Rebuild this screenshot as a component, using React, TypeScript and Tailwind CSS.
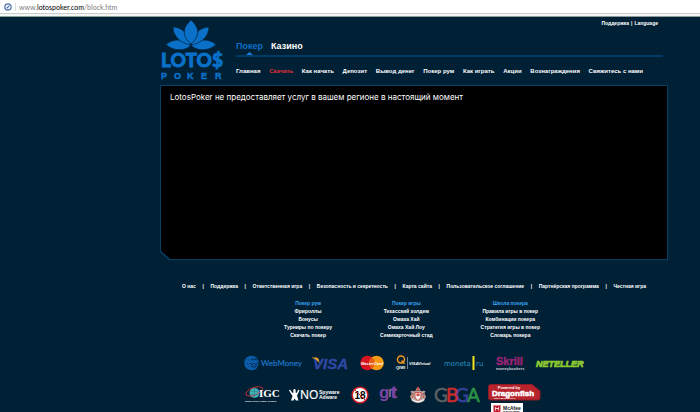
import React from 'react';

const mainNav = [
  'Главная',
  'Скачать',
  'Как начать',
  'Депозит',
  'Вывод денег',
  'Покер рум',
  'Как играть',
  'Акции',
  'Вознаграждения',
  'Свяжитесь с нами',
];

const footerLinks = [
  'О нас',
  'Поддержка',
  'Ответственная игра',
  'Безопасность и секретность',
  'Карта сайта',
  'Пользовательское соглашение',
  'Партнёрская программа',
  'Честная игра',
];

const columns = [
  { title: 'Покер рум', links: ['Фрироллы', 'Бонусы', 'Турниры по покеру', 'Скачать покер'] },
  { title: 'Покер игры', links: ['Техасский холдем', 'Омаха Хай', 'Омаха Хай Лоу', 'Семикарточный стад'] },
  { title: 'Школа покера', links: ['Правила игры в покер', 'Комбинации покера', 'Стратегия игры в покер', 'Словарь покера'] },
];

const AddressBar: React.FC = () => (
  <div className="flex h-[17px] items-start border-b border-[#8f9c9c] bg-[#f4f5f5]">
    <div className="flex h-[14px] w-full items-center border-b border-[#c9cbcd] bg-white pl-1">
      <svg className="h-2 w-2" viewBox="0 0 8 8" fill="none" aria-hidden="true">
        <circle cx="4" cy="4" r="3.2" stroke="#4a6ea9" strokeWidth="1.2" />
        <path d="M2.8 5.2 5.4 2.6M3.4 4.2l.8.8" stroke="#4a6ea9" strokeWidth="1.1" />
      </svg>
      <span className="ml-[3px] h-2 w-px bg-[#dcdcdc]" />
      <span className="ml-[3px] font-['Lato',sans-serif] text-[7px] leading-[12px] font-normal text-[#808080]">
        www.<span className="text-black">lotospoker.com</span>/block.htm
      </span>
    </div>
  </div>
);

const LotosLogo: React.FC = () => (
  <svg className="h-[60px] w-16 shrink-0" viewBox="0 0 64 60" fill="#0a70c8" role="img" aria-label="Lotos Poker">
    <g stroke="#002035" strokeWidth="0.7">
      <path d="M31 25C27 31 13 32 6 24.500 12 19 23 18 31 25z" />
      <path d="M31 25c4 6 18 7 25-.5C50 19 39 18 31 25z" />
      <path d="M31 25C20 23 13 16 13 7c9 0 17 8 18 18z" />
      <path d="M31 25c11-2 18-9 18-18-9 0-17 8-18 18z" />
      <path d="M31 24C22 16 22 8 31 0c9 8 9 16 0 24z" />
    </g>
    <g stroke="#0a70c8">
      <text x="1" y="47" fontFamily="Lato, sans-serif" fontWeight="900" fontSize="19" strokeWidth="0.8">LOTO$</text>
      <text x="1 14 27 41 55" y="58.5" fontFamily="Liberation Sans, sans-serif" fontWeight="bold" fontSize="9" strokeWidth="0.5">POKER</text>
    </g>
  </svg>
);

const Header: React.FC = () => (
  <header className="flex gap-3 pt-[3px]">
    <LotosLogo />
    <div className="min-w-0 flex-1 pr-[5px]">
      <div className="flex justify-end gap-[2px] pr-[5px] text-[5px] leading-[6px]">
        <a href="#support">Поддержка</a>
        <span>|</span>
        <a href="#language">Language</a>
      </div>
      <div className="mt-[14px] flex gap-2 border-b-2 border-[#003a66] text-[9px] leading-[12px]">
        <a href="#poker" className="text-[#0a70c8]">
          Покер
          <svg className="mx-auto h-[3px] w-[7px]" viewBox="0 0 7 3" fill="#1c7ad6" aria-hidden="true">
            <path d="M0 3 3.5 0 7 3z" />
          </svg>
        </a>
        <a href="#casino">Казино</a>
      </div>
      <nav className="mt-[10px] flex justify-between pr-5 whitespace-nowrap text-[6px] leading-[8px]">
        {mainNav.map((item) => (
          <a key={item} href="#nav" className={item === 'Скачать' ? 'text-[#e0303c]' : 'text-white'}>
            {item}
          </a>
        ))}
      </nav>
    </div>
  </header>
);

const Notice: React.FC = () => (
  <main className="mt-[5px] bg-[#073f66] p-px [clip-path:polygon(0_0,100%_0,100%_100%,9px_100%,0_calc(100%-8px))]">
    <div className="min-h-[173px] bg-black px-[9px] py-[5px] font-['Inter',sans-serif] text-[8px] leading-[12px] font-normal [clip-path:polygon(0_0,100%_0,100%_100%,9px_100%,0_calc(100%-8px))]">
      LotosPoker не предоставляет услуг в вашем регионе в настоящий момент
    </div>
  </main>
);

const WebMoney: React.FC = () => (
  <svg className="h-4 w-14 overflow-visible" viewBox="0 0 56 16" role="img" aria-label="WebMoney">
    <circle cx="7.500" cy="8" r="7.300" fill="#0b5cab" />
    <g fill="none" stroke="#002035" strokeWidth="1">
      <path d="M7 3.500 8.800 5.200l1.700-1.700 1.800 1.700 2-2M6 8l1.800 1.800L9.600 8l1.800 1.800L13.500 8l1.500 1M7 12.300l1.800-1.500 1.700 1.700 1.800-1.700 1.700 1.500" />
      <path d="M3.500 4 5 5.500M3 8l1.500 1.500M4 12l1-1" strokeWidth="0.600" />
    </g>
    <text x="17" y="11" fontFamily="Lato, sans-serif" fontWeight="normal" fontSize="8" fill="#1b74c4" stroke="#1b74c4" strokeWidth="0.200">WebMoney</text>
  </svg>
);

const Visa: React.FC = () => (
  <svg className="h-4 w-9 overflow-visible" viewBox="0 0 36 16" role="img" aria-label="Visa">
    <text x="1" y="13.500" fontFamily="Liberation Sans, sans-serif" fontWeight="bold" fontStyle="italic" fontSize="15" fill="#3049a8" stroke="#3049a8" strokeWidth="0.300">VISA</text>
    <path d="M0 2.500h4.500Q6.500 2.500 7 5l.5 3.500Q5 4 0 2.900z" fill="#e8a22e" />
  </svg>
);

const MasterCard: React.FC = () => (
  <svg className="h-4 w-6" viewBox="0 0 24 16" role="img" aria-label="MasterCard">
    <circle cx="7.500" cy="8" r="7.300" fill="#d81420" />
    <circle cx="16.500" cy="8" r="7.300" fill="#f59a12" />
    <path d="M12 2.300a7.300 7.300 0 0 1 0 11.400 7.300 7.300 0 0 1 0-11.400z" fill="#e85a18" />
    <text x="12" y="9.500" textAnchor="middle" fontFamily="Liberation Sans, sans-serif" fontWeight="bold" fontStyle="italic" fontSize="4" fill="#fff">MasterCard</text>
  </svg>
);

const Qiwi: React.FC = () => (
  <svg className="h-4 w-9 overflow-visible" viewBox="0 0 36 16" role="img" aria-label="QIWI Visa Virtual">
    <circle cx="5" cy="4.500" r="3.500" fill="none" stroke="#f49a20" strokeWidth="1.500" />
    <path d="m5.500 5.500 3 3.300" stroke="#f49a20" strokeWidth="1.300" />
    <g fontFamily="Liberation Sans, sans-serif" fontWeight="bold" fill="#fff">
      <text x="0" y="14" fontSize="4">QIWI</text>
      <text x="13" y="9.500" fontSize="4" fontStyle="italic">VISAVirtual</text>
    </g>
    <path d="M11.500 2v12" stroke="#9aa8b2" strokeWidth="0.700" />
  </svg>
);

const Moneta: React.FC = () => (
  <svg className="h-4 w-10" viewBox="0 0 40 16" role="img" aria-label="moneta.ru">
    <g fontFamily="DejaVu Sans, sans-serif" fontWeight="normal" fontSize="7" fill="#2490c4">
      <text x="0" y="11">moneta</text>
      <text x="32" y="11">ru</text>
    </g>
    <path d="M29.500 1v14" stroke="#f2e21a" strokeWidth="2" />
  </svg>
);

const Skrill: React.FC = () => (
  <svg className="h-4 w-7 overflow-visible" viewBox="0 0 28 16" role="img" aria-label="Skrill moneybookers">
    <text x="0" y="10" fontFamily="Liberation Sans, sans-serif" fontWeight="bold" fontSize="11" fill="#9b2375" stroke="#9b2375" strokeWidth="0.400">Skrill</text>
    <text x="0" y="14.500" fontFamily="Liberation Sans, sans-serif" fontWeight="bold" fontSize="4" fill="#c8d0d6">moneybookers</text>
  </svg>
);

const Neteller: React.FC = () => (
  <svg className="h-4 w-12 overflow-visible" viewBox="0 0 48 16" role="img" aria-label="Neteller">
    <text x="0" y="12" fontFamily="Liberation Sans, sans-serif" fontWeight="bold" fontStyle="italic" fontSize="9" fill="#8ecb30" stroke="#8ecb30" strokeWidth="0.700">NETELLER</text>
  </svg>
);

const Igc: React.FC = () => (
  <svg className="h-[18px] w-9 overflow-visible" viewBox="0 0 36 18" role="img" aria-label="IGC Interactive Gaming Council">
    <circle cx="9.500" cy="7" r="5" fill="#3fb0b4" />
    <path d="M1 9C0 3 14-2 18 2.500M1 9c5 3 12 0 17-6.500" fill="none" stroke="#d92f38" strokeWidth="0.900" />
    <path d="M6 5.500h7M5.500 8.500h8M9.500 2v10" stroke="#1f6f78" strokeWidth="0.400" />
    <text x="14" y="11" fontFamily="Liberation Serif, serif" fontWeight="bold" fontSize="11" fill="#fff">IGC</text>
    <text x="0" y="16" fontFamily="Liberation Sans, sans-serif" fontWeight="bold" fontSize="2" fill="#fff">INTERACTIVE GAMING COUNCIL</text>
  </svg>
);

const NoSpyware: React.FC = () => (
  <svg className="h-[18px] w-[50px] overflow-visible" viewBox="0 0 50 18" fill="#fff" role="img" aria-label="No Spyware Adware">
    <path d="M0 4.500 1 3.500 3.500 7 4.500 6.500Q3.800 3 5.500 3T6.500 6.500l1 .5L9.500 3.500l1 1L8 9.500 9.500 14.500H7L5.500 12.500 4.500 14.500H2L3.500 10z" />
    <text x="11" y="13" fontFamily="Open Sans, sans-serif" fontWeight="normal" fontSize="12" stroke="#fff" strokeWidth="0.200">NO</text>
    <g fontFamily="Liberation Sans, sans-serif" fontWeight="bold" fontSize="5">
      <text x="30" y="8">Spyware</text>
      <text x="30" y="13">Adware</text>
    </g>
  </svg>
);

const Eighteen: React.FC = () => (
  <svg className="h-[18px] w-[18px]" viewBox="0 0 18 18" role="img" aria-label="18+">
    <circle cx="9" cy="9" r="7.800" fill="#fff" stroke="#d5202a" strokeWidth="1.500" />
    <text x="9" y="12.800" textAnchor="middle" fontFamily="Liberation Sans, sans-serif" fontWeight="bold" fontSize="10">18</text>
    <path d="m3.500 3.500 11 11" stroke="#d5202a" strokeWidth="1" />
  </svg>
);

const Gt: React.FC = () => (
  <svg className="h-[18px] w-[18px] overflow-visible" viewBox="0 0 18 18" role="img" aria-label="GT">
    <g fontFamily="Liberation Sans, sans-serif" fontWeight="bold" fontSize="17" fill="#7b45a3">
      <text x="0" y="11.500">g</text>
      <text x="12" y="11.500" stroke="#7b45a3" strokeWidth="0.800">t</text>
    </g>
    <path d="M11 3v8" stroke="#8b7f9c" strokeWidth="1.500" />
  </svg>
);

const Crest: React.FC = () => (
  <svg className="h-[18px] w-[18px]" viewBox="0 0 18 18" role="img" aria-label="Crest">
    <path d="M1.500 5.500Q3.500 4 5.500 5.500L7 3.500Q9-1.500 11 3.500l1.500 2Q14.500 4 16.500 5.500L15.500 8l1.500 2.500-2 4.500q-6 4-12 0L1 10.500 2.500 8z" fill="#b9a3a2" />
    <path d="M6 6.500h6v4.500Q11 14 9 14.500 7 14 6 11z" fill="#f0efec" stroke="#c23c34" strokeWidth="0.800" />
    <path d="M7.500 7.500h3V10h-3zM8 1.500h2v2.300H8z" fill="#d0473c" />
    <path d="M2 9.500h2.500l-.8 3zM13.500 9.500H16l-1.700 3z" fill="#c86048" />
    <path d="M2 6.500 4.500 8 3.500 9M16 6.500 13.500 8l1 1M6 4.500h6" fill="none" stroke="#8b3232" strokeWidth="0.700" />
    <path d="M3 13.500q6 4.500 12 0" fill="none" stroke="#f0f2f3" strokeWidth="1.400" />
  </svg>
);

const Gbga: React.FC = () => (
  <svg className="h-[18px] w-[45px] overflow-visible" viewBox="0 0 45 18" role="img" aria-label="GBGA">
    <g fontFamily="Lato, sans-serif" fontWeight="normal" fontSize="19" strokeWidth="0.600">
      <text x="-1" y="16" fill="#5a5f62" stroke="#5a5f62">G</text>
      <text x="32" y="16" fill="#2b9446" stroke="#2b9446">A</text>
      <text x="20" y="16" fill="#33429c" stroke="#33429c">G</text>
      <text x="11" y="16" fill="#d02a2c" stroke="#d02a2c">B</text>
    </g>
  </svg>
);

const Dragonfish: React.FC = () => (
  <svg className="h-[17px] w-[53px]" viewBox="0 0 53 17" role="img" aria-label="Powered by Dragonfish">
    <path d="M2.500.5H44l8 6.500v7q0 2-2 2H2.500q-2 0-2-2V2.500q0-2 2-2z" fill="#b8242e" stroke="#8e1a24" />
    <g fontFamily="Liberation Sans, sans-serif" fontWeight="bold" fill="#fff">
      <text x="21" y="5" fontSize="4" textAnchor="middle">Powered by</text>
      <text x="25" y="12" fontSize="8" textAnchor="middle" stroke="#fff" strokeWidth="0.500">Dragonfish</text>
      <text x="6" y="14.800" fontSize="2">Total Gaming Services</text>
    </g>
  </svg>
);

const McAfee: React.FC = () => (
  <svg className="h-[13px] w-8" viewBox="0 0 32 13" role="img" aria-label="McAfee Secure">
    <path d="M0 0h32v13H0z" fill="#fff" />
    <path d="M2.500 2q3.500 1 7 0v6.500L6 11 2.500 8.500z" fill="#c01f30" />
    <path d="M4.500 7.500V4.500L6 6l1.500-1.500v3" fill="none" stroke="#fff" strokeWidth="0.800" />
    <g fontFamily="Liberation Sans, sans-serif" fontWeight="bold" fill="#15181b">
      <text x="12" y="6.500" fontSize="5">McAfee</text>
      <text x="12" y="11" fontSize="4">SECURE</text>
    </g>
  </svg>
);

const Footer: React.FC = () => (
  <footer className="pt-[22px] text-[5px]">
    <nav className="flex justify-between px-[22px] whitespace-nowrap leading-[8px]">
      {footerLinks.map((item, i) => (
        <React.Fragment key={item}>
          {i > 0 && <span>|</span>}
          <a href="#footer">{item}</a>
        </React.Fragment>
      ))}
    </nav>

    <div className="mt-[9px] flex justify-center gap-12 pr-1 text-center leading-[8px]">
      {columns.map((column) => (
        <section key={column.title}>
          <h2 className="text-[#38a4f0]">{column.title}</h2>
          <ul>
            {column.links.map((link) => (
              <li key={link}>
                <a href="#info">{link}</a>
              </li>
            ))}
          </ul>
        </section>
      ))}
    </div>

    <div className="mt-4 flex justify-center gap-3">
      <WebMoney />
      <Visa />
      <MasterCard />
      <Qiwi />
      <Moneta />
      <Skrill />
      <Neteller />
    </div>

    <div className="mt-[13px] flex items-start justify-center gap-2 pr-[42px]">
      <div className="flex gap-2 pt-[2px]">
        <Igc />
        <NoSpyware />
        <div className="flex gap-[10px] px-1">
          <Eighteen />
          <Gt />
        </div>
        <Crest />
        <Gbga />
      </div>
      <div>
        <Dragonfish />
        <div className="mt-[2px] pl-[3px]">
          <McAfee />
        </div>
      </div>
    </div>
  </footer>
);

export default function App() {
  return (
    <div className="min-h-screen bg-[#002035] font-['Liberation_Sans',sans-serif] font-bold text-white">
      <AddressBar />
      <div className="pr-8 pl-40">
        <Header />
        <Notice />
        <Footer />
      </div>
    </div>
  );
}
